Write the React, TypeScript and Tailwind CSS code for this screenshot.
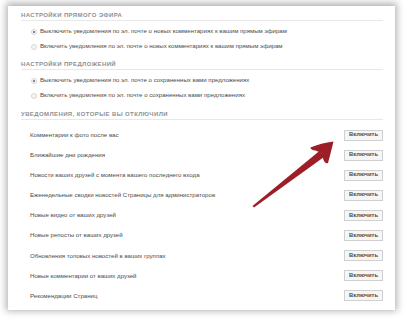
import React from "react";

const radiosA = [
  { on: true, t: "Выключить уведомления по эл. почте о новых комментариях к вашим прямым эфирам" },
  { on: false, t: "Включить уведомления по эл. почте о новых комментариях к вашим прямым эфирам" },
];
const radiosB = [
  { on: true, t: "Выключить уведомления по эл. почте о сохраненных вами предложениях" },
  { on: false, t: "Включить уведомления по эл. почте о сохраненных вами предложениях" },
];
const rows = [
  "Комментарии к фото после вас",
  "Ближайшие дни рождения",
  "Новости ваших друзей с момента вашего последнего входа",
  "Еженедельные сводки новостей Страницы для администраторов",
  "Новые видео от ваших друзей",
  "Новые репосты от ваших друзей",
  "Обновления топовых новостей в ваших группах",
  "Новые комментарии от ваших друзей",
  "Рекомендации Страниц",
];

function Header({ children }: { children: React.ReactNode }) {
  return (
    <div className="h-[12px] flex items-center border-b border-[#e8e8e8] text-[6px] font-bold tracking-[0.4px] text-[#909090] leading-none">
      {children}
    </div>
  );
}

function Radio({ on, t }: { on: boolean; t: string }) {
  return (
    <div className="h-[15px] flex items-center pl-[10px] gap-[3px]">
      <span className="w-[6px] h-[6px] rounded-full border border-[#d8d8d8] bg-[#f4f4f4] flex items-center justify-center">
        {on && <span className="w-[2px] h-[2px] rounded-full bg-[#666]" />}
      </span>
      <span className="text-[6.1px] text-[#4a4a4a] leading-none">{t}</span>
    </div>
  );
}

export default function App() {
  return (
    <div
      className="w-[407px] h-[320px] bg-white pt-[6px] pl-[8px] overflow-hidden relative"
      style={{ fontFamily: '"Liberation Sans", Arial, sans-serif' }}
    >
      <div className="w-[387px] h-[304px] bg-white shadow-[0_-1px_7px_2px_rgba(0,0,0,0.3)] pl-[13px] pr-[12px] pt-[3px]">
        <Header>НАСТРОЙКИ ПРЯМОГО ЭФИРА</Header>
        <div className="pt-[3px]">
          {radiosA.map((r, i) => (
            <Radio key={i} {...r} />
          ))}
        </div>
        <div className="pt-[4px]">
          <Header>НАСТРОЙКИ ПРЕДЛОЖЕНИЙ</Header>
        </div>
        <div className="pt-[3px]">
          {radiosB.map((r, i) => (
            <Radio key={i} {...r} />
          ))}
        </div>
        <div className="pt-[5px]">
          <Header>УВЕДОМЛЕНИЯ, КОТОРЫЕ ВЫ ОТКЛЮЧИЛИ</Header>
        </div>
        <div className="pt-[5px]">
          {rows.map((r, i) => (
            <div key={i} className="h-[20.1px] flex items-center justify-between pl-[9px]">
              <span className="text-[6.1px] text-[#4a4a4a] leading-none">{r}</span>
              <button className="w-[39px] h-[11px] border border-[#d0d0d0] bg-[#f5f6f7] text-[5.8px] font-bold text-[#4a4a4a] leading-none flex items-center justify-center">
                Включить
              </button>
            </div>
          ))}
        </div>
      </div>
      <svg className="absolute left-0 top-0 pointer-events-none" width="407" height="320" viewBox="0 0 407 320">
        <path
          d="M252.5 206 L254 207.5 L324 157 L320 150.5 Z"
          fill="#9c1e27"
        />
        <path
          d="M310.5 147.5 Q321 143 333.5 141.5 Q331 152 328 163 Q325 164.5 323 158.5 L321.5 153 L315.5 150.5 Q310.5 150 310.5 147.5 Z"
          fill="#9c1e27"
        />
      </svg>
    </div>
  );
}
